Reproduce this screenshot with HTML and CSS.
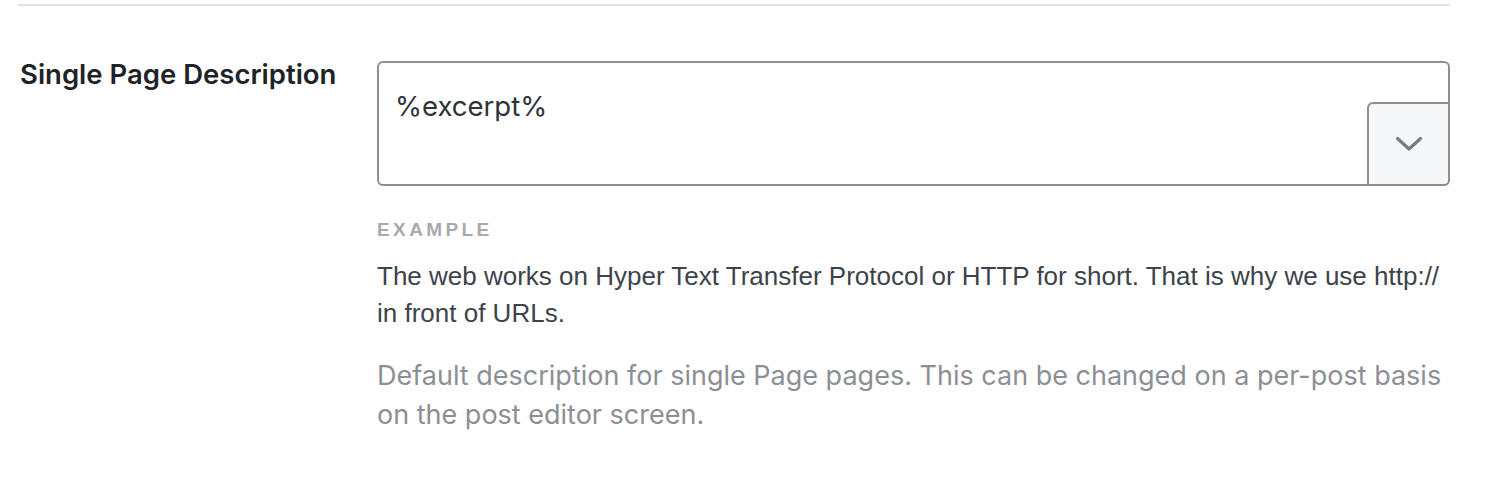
FILE: index.html
```html
<!DOCTYPE html>
<html>
<head>
<meta charset="utf-8">
<link rel="stylesheet" href="styles.css">
</head>
<body>
<div class="wrap">
  <div class="divider"></div>
  <div class="row">
    <div class="label">Single Page Description</div>
    <div class="field">
      <div class="input">
        <div class="value">%excerpt%</div>
        <div class="toggle">
          <svg width="28" height="16" viewBox="0 0 28 16"><path d="M2.5 2.5 L14 13 L25.5 2.5" fill="none" stroke="#787c82" stroke-width="3.2" stroke-linecap="round" stroke-linejoin="round"/></svg>
        </div>
      </div>
      <div class="example-title">EXAMPLE</div>
      <div class="example-text">The web works on Hyper Text Transfer Protocol or HTTP for short. That is why we use http:// in front of URLs.</div>
      <div class="desc">Default description for single Page pages. This can be changed on a per-post basis on the post editor screen.</div>
    </div>
  </div>
</div>
</body>
</html>
```
FILE: styles.css
```css
html, body { margin: 0; padding: 0; background: #fff; }
.wrap { padding: 4px 56px 0 18px; }
.divider { height: 2px; background: #e2e3e5; }
.row { display: flex; margin-top: 55px; }
.label {
  width: 359px; flex: none; box-sizing: border-box;
  font-family: Inter, sans-serif; font-weight: 600; font-size: 27.5px;
  color: #1d2327; padding-left: 2px; line-height: 34px; margin-top: -4px;
}
.field { flex: 1; min-width: 0; }
.input {
  position: relative; border: 2px solid #8c8f94; border-radius: 6px;
  box-sizing: border-box; height: 125px;
}
.value {
  font-family: Inter, sans-serif; font-size: 27.5px; color: #2c3338;
  padding: 26px 0 0 16px; line-height: 34px;
}
.toggle {
  position: absolute; right: -2px; bottom: -2px; width: 83px; height: 84px;
  box-sizing: border-box; border: 2px solid #8c8f94; border-radius: 6px 0 6px 0;
  background: #f6f7f9; display: flex; align-items: center; justify-content: center;
}
.example-title {
  margin-top: 34px; font-family: "Liberation Sans", Arial, sans-serif; font-weight: 700;
  font-size: 19px; letter-spacing: 3.4px; color: #a7aaad; line-height: 20px;
}
.example-text {
  margin-top: 18px; font-family: "Liberation Sans", Arial, sans-serif; font-size: 26px;
  color: #3c434a; line-height: 37px;
}
.desc {
  margin-top: 24px; font-family: Inter, sans-serif; font-size: 27px; color: #8c8f94; line-height: 39px;
}
```
